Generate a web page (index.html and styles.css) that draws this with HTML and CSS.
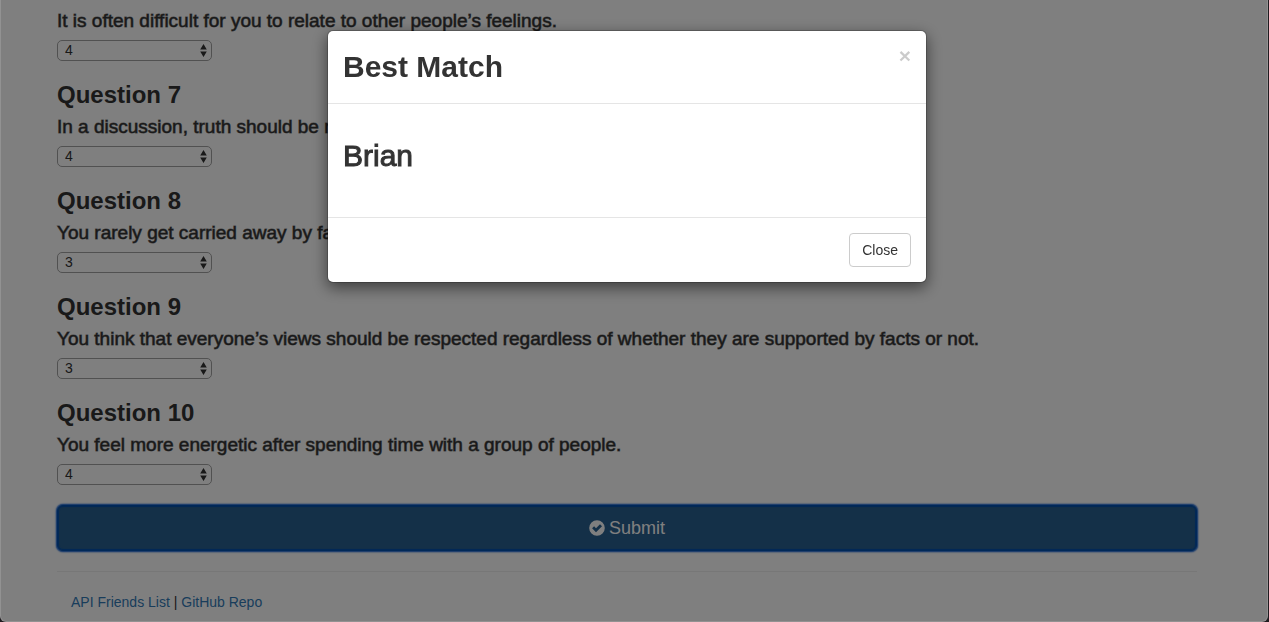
FILE: index.html
```
<!DOCTYPE html>
<html lang="en">
<head>
<meta charset="utf-8">
<meta name="viewport" content="width=device-width, initial-scale=1">
<title>Friend Finder Survey</title>
<link rel="stylesheet" href="styles.css">
</head>
<body class="modal-open">
<svg class="sprite" aria-hidden="true">
  <symbol id="arrows" viewBox="0 0 7 13"><path d="M3.5 0L6.8 5.4H.2zM3.5 13L.2 7.6h6.6z"/></symbol>
</svg>
<main class="container">
  <form class="survey">
    <section class="question">
      <h4 class="prompt"><label for="q6">It is often difficult for you to relate to other people’s feelings.</label></h4>
      <div class="picker"><select id="q6"><option>1</option><option>2</option><option>3</option><option selected>4</option><option>5</option></select><svg class="arrows"><use href="#arrows"/></svg></div>
    </section>
    <section class="question">
      <h3 class="number">Question 7</h3>
      <h4 class="prompt"><label for="q7">In a discussion, truth should be more important than people’s sensitivities.</label></h4>
      <div class="picker"><select id="q7"><option>1</option><option>2</option><option>3</option><option selected>4</option><option>5</option></select><svg class="arrows"><use href="#arrows"/></svg></div>
    </section>
    <section class="question">
      <h3 class="number">Question 8</h3>
      <h4 class="prompt"><label for="q8">You rarely get carried away by fantasies and ideas.</label></h4>
      <div class="picker"><select id="q8"><option>1</option><option>2</option><option selected>3</option><option>4</option><option>5</option></select><svg class="arrows"><use href="#arrows"/></svg></div>
    </section>
    <section class="question">
      <h3 class="number">Question 9</h3>
      <h4 class="prompt"><label for="q9">You think that everyone’s views should be respected regardless of whether they are supported by facts or not.</label></h4>
      <div class="picker"><select id="q9"><option>1</option><option>2</option><option selected>3</option><option>4</option><option>5</option></select><svg class="arrows"><use href="#arrows"/></svg></div>
    </section>
    <section class="question">
      <h3 class="number">Question 10</h3>
      <h4 class="prompt"><label for="q10">You feel more energetic after spending time with a group of people.</label></h4>
      <div class="picker"><select id="q10"><option>1</option><option>2</option><option>3</option><option selected>4</option><option>5</option></select><svg class="arrows"><use href="#arrows"/></svg></div>
    </section>
    <button class="submit" type="submit">
      <svg class="check" viewBox="0 0 16 16" aria-hidden="true"><path fill-rule="evenodd" d="M8 .2a7.8 7.8 0 1 1 0 15.600a7.800 7.800 0 0 1 0-15.600zM3.100 8.300L7 12.200l6-6-2-2-4 4-1.900-1.900z"/></svg>
      <span>Submit</span>
    </button>
  </form>
  <hr class="rule">
  <footer class="footer"><a href="/api/friends">API Friends List</a> | <a href="https://github.com">GitHub Repo</a></footer>
</main>
<div class="backdrop"></div>
<div class="modal">
  <div class="dialog" role="dialog" aria-modal="true" aria-labelledby="modal-title">
    <header class="dialog-header">
      <h2 class="dialog-title" id="modal-title">Best Match</h2>
      <button class="dismiss" type="button" aria-label="Dismiss">×</button>
    </header>
    <div class="dialog-body"><h2 class="match">Brian</h2></div>
    <footer class="dialog-footer"><button class="close-button" type="button">Close</button></footer>
  </div>
</div>
<div class="frame"></div>
</body>
</html>
```
FILE: styles.css
```
* { box-sizing: border-box; }
body {
  margin: 0;
  background: #fff;
  color: #333;
  font: 14px/20px "Helvetica Neue", Helvetica, "Liberation Sans", Arial, sans-serif;
}
.modal-open { padding-right: 15px; overflow: hidden; }
h2, h3, h4 { margin: 0; }
.sprite { position: absolute; width: 0; height: 0; }
.container { max-width: 1170px; margin: 0 auto; padding: 11px 15px 10px; }
.survey { display: flex; flex-direction: column; gap: 20px; }
.question { display: flex; flex-direction: column; align-items: flex-start; gap: 9px; }
.question + .question { margin-top: 1px; }
.number { font-size: 24px; line-height: 26px; font-weight: 700; }
.prompt {
  font-size: 19px;
  line-height: 20px;
  font-weight: 400;
  -webkit-text-stroke: 1px rgba(51, 51, 51, .6);
}
.picker { display: grid; width: 155px; align-items: center; }
.picker select {
  grid-area: 1 / 1;
  appearance: none;
  width: 100%;
  height: 21px;
  margin: 0;
  padding: 0 7px;
  border: 1px solid #a2a2a2;
  border-radius: 5px;
  background: #fff;
  color: #333;
  font: inherit;
  line-height: 19px;
}
.arrows {
  grid-area: 1 / 1;
  justify-self: end;
  width: 7px;
  height: 13px;
  margin-right: 5px;
  fill: #333;
  pointer-events: none;
}
.submit {
  display: flex;
  align-items: center;
  justify-content: center;
  gap: 4px;
  height: 46px;
  padding: 0 16px;
  border: 1px solid #0050b0;
  border-radius: 6px;
  background: #286090;
  box-shadow: inset 0 0 1px 1px #0050b0, 0 0 1px 1px #3c7cd8, 0 0 2px 1px #3c7cd8;
  color: #fff;
  font: inherit;
  font-size: 18px;
}
.check { width: 16px; height: 16px; fill: #fff; }
.rule { margin: 20px 0; border: 0; border-top: 1px solid #eee; }
.footer { padding: 0 14px; }
.footer a { color: #337ab7; text-decoration: none; }
.backdrop { position: fixed; inset: 0; background: rgba(0, 0, 0, .5); }
.modal { position: fixed; inset: 0; padding: 30px 15px 30px 0; }
.dialog {
  max-width: 600px;
  margin: 0 auto;
  border: 1px solid rgba(0, 0, 0, .2);
  border-radius: 6px;
  background: #fff;
  background-clip: padding-box;
  box-shadow: 0 5px 15px rgba(0, 0, 0, .5);
}
.dialog-header {
  display: flex;
  justify-content: space-between;
  align-items: flex-start;
  padding: 15px;
  border-bottom: 1px solid #e5e5e5;
}
.dialog-title { font-size: 30px; line-height: 42px; font-weight: 700; }
.dismiss {
  padding: 0;
  border: 0;
  background: none;
  color: #000;
  font: inherit;
  font-size: 21px;
  line-height: 20px;
  font-weight: 700;
  opacity: .2;
}
.dialog-body { padding: 35px 15px 45px; }
.match {
  font-size: 30px;
  line-height: 33px;
  font-weight: 400;
  -webkit-text-stroke: 1px #333;
}
.dialog-footer { padding: 15px; border-top: 1px solid #e5e5e5; text-align: right; }
.close-button {
  height: 34px;
  padding: 0 12px;
  border: 1px solid #ccc;
  border-radius: 4px;
  background: #fff;
  color: #333;
  font: inherit;
}
.frame {
  position: fixed;
  inset: 0 1px 0 0;
  border: 1px solid rgba(255, 255, 255, .15);
  border-top: 0;
  border-radius: 0 0 6px 6px;
  box-shadow: 0 0 0 8px #201c20;
  pointer-events: none;
}
```
